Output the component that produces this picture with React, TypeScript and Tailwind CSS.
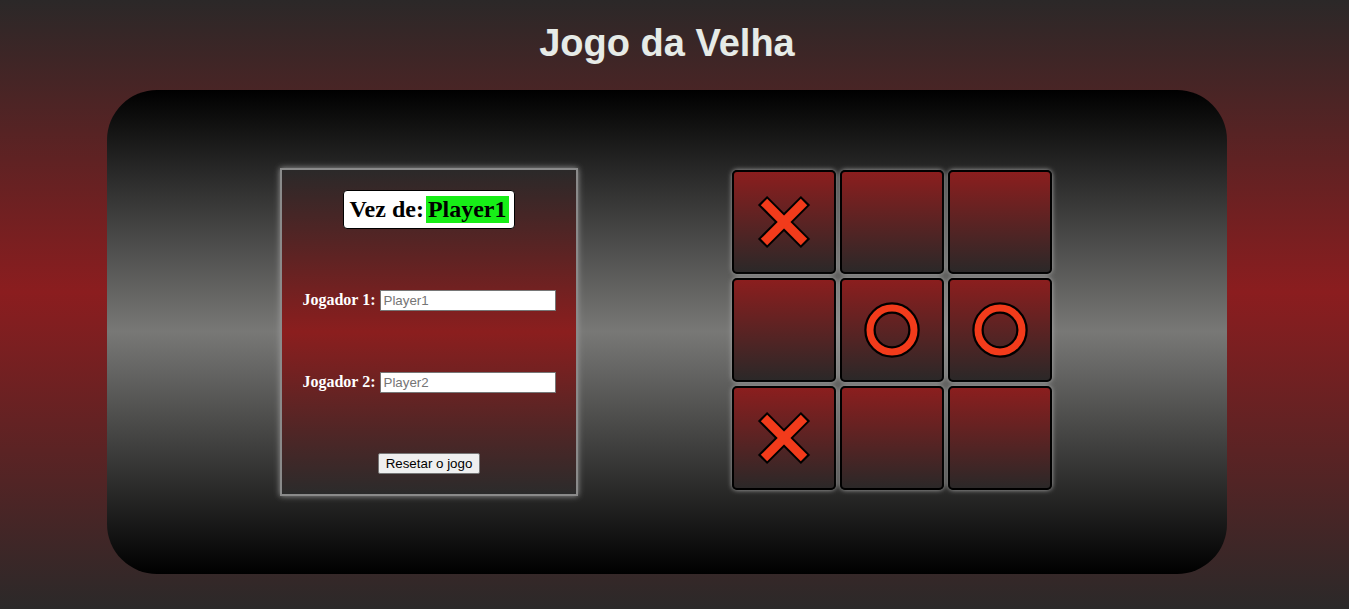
import React from 'react';

type Mark = 'X' | 'O' | '';

const board: Mark[] = ['X', '', '', '', 'O', 'O', 'X', '', ''];

const XMark: React.FC = () => (
  <svg width="60" height="60" viewBox="0 0 60 60">
    <line x1="8.5" y1="8.5" x2="51.5" y2="51.5" stroke="#000" strokeWidth="13" />
    <line x1="51.5" y1="8.5" x2="8.5" y2="51.5" stroke="#000" strokeWidth="13" />
    <line x1="10" y1="10" x2="50" y2="50" stroke="#f23b1b" strokeWidth="9" />
    <line x1="50" y1="10" x2="10" y2="50" stroke="#f23b1b" strokeWidth="9" />
  </svg>
);

const OMark: React.FC = () => (
  <svg width="60" height="60" viewBox="0 0 60 60">
    <circle cx="30" cy="30" r="22" fill="none" stroke="#000" strokeWidth="11.5" />
    <circle cx="30" cy="30" r="22" fill="none" stroke="#f23b1b" strokeWidth="7" />
  </svg>
);

export default function App() {
  return (
    <div
      className="min-h-screen w-full bg-[linear-gradient(#2b2828_0%,#8b1d1f_48%,#2b2929_100%)]"
      style={{ fontFamily: '"Liberation Sans", Arial, sans-serif' }}
    >
      <div className="w-[1334px] flex flex-col items-center">
        <h1 className="mt-[22px] text-[38px] font-bold leading-[43px] text-[#e6ebe7]">Jogo da Velha</h1>

        <div className="mt-[25px] w-[1120px] h-[484px] rounded-[50px] flex items-center justify-center gap-[154px] pr-[2px] bg-[linear-gradient(#000_0%,#787876_50%,#000_100%)]">
          {/* painel */}
          <div className="w-[298px] h-[328px] border-2 border-[#8a8a8a] shadow-[0_0_6px_#9a9a9a] flex flex-col items-center pt-[20px] bg-[linear-gradient(#2b2929_0%,#8b1e1e_50%,#2b2b2b_100%)]">
            <div
              className="bg-white border border-black rounded-[4px] px-[5px] py-[5px] flex items-center text-[24px] font-bold leading-[27px] text-black"
              style={{ fontFamily: '"Liberation Serif", "Times New Roman", serif' }}
            >
              <span>Vez de:</span>
              <span className="ml-[2px] bg-[#17ee17] px-[2px]">Player1</span>
            </div>

            <div className="mt-[59px] flex items-center gap-[4px]">
              <label
                className="text-white font-bold text-[16px]"
                style={{ fontFamily: '"Liberation Serif", "Times New Roman", serif' }}
              >
                Jogador 1:
              </label>
              <input
                placeholder="Player1"
                className="w-[176px] h-[21px] bg-white border border-[#767676] px-[3px] text-[13.33px] placeholder:text-[#757575] outline-none"
              />
            </div>

            <div className="mt-[58px] flex items-center gap-[4px]">
              <label
                className="text-white font-bold text-[16px]"
                style={{ fontFamily: '"Liberation Serif", "Times New Roman", serif' }}
              >
                Jogador 2:
              </label>
              <input
                placeholder="Player2"
                className="w-[176px] h-[21px] bg-white border border-[#767676] px-[3px] text-[13.33px] placeholder:text-[#757575] outline-none"
              />
            </div>

            <button className="mt-[59px] h-[21px] px-[7px] bg-[#efefef] border border-[#767676] rounded-[2px] text-[13.33px] text-black leading-none">
              Resetar o jogo
            </button>
          </div>

          {/* tabuleiro */}
          <div className="grid grid-cols-3 gap-[4px] mb-[4px]">
            {board.map((m, i) => (
              <div
                key={i}
                className="w-[104px] h-[104px] border-2 border-black rounded-[5px] shadow-[0_0_5px_#b0b0b0] flex items-center justify-center bg-[linear-gradient(#8b1e1e,#2b2828)]"
              >
                {m === 'X' && <XMark />}
                {m === 'O' && <OMark />}
              </div>
            ))}
          </div>
        </div>
      </div>
    </div>
  );
}
